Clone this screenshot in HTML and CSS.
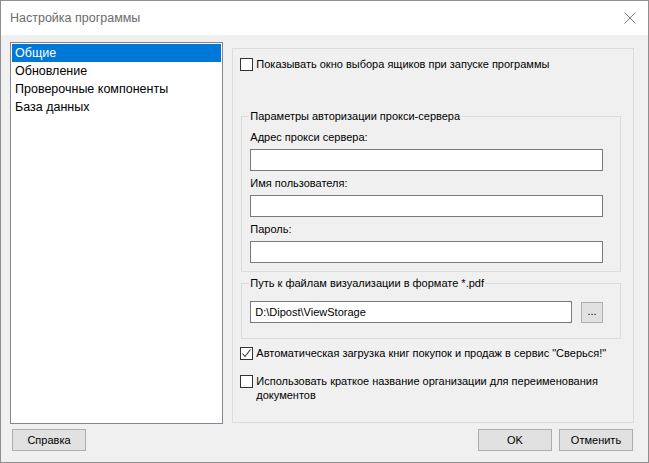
FILE: index.html
```html
<!DOCTYPE html>
<html>
<head>
<meta charset="utf-8" />
<title>Настройка программы</title>
<link rel="stylesheet" href="styles.css">
</head>
<body>

<div class="window">

	<div class="titlebar">
		<span class="title">Настройка программы</span>
		<svg class="close" width="12" height="12" viewBox="0 0 12 12">
			<path d="M0.5 0.5 L11.5 11.5 M11.5 0.5 L0.5 11.5" stroke="#7a7a7a" stroke-width="1" fill="none" />
		</svg>
	</div>

	<div class="main">
		<ul class="listbox">
			<li class="selected">Общие</li>
			<li>Обновление</li>
			<li>Проверочные компоненты</li>
			<li>База данных</li>
		</ul>

		<div class="panel">
			<label class="check first-row">
				<span class="box"></span>
				<span>Показывать окно выбора ящиков при запуске программы</span>
			</label>

			<fieldset class="group proxy">
				<legend>Параметры авторизации прокси-сервера</legend>
				<div class="field-label">Адрес прокси сервера:</div>
				<div class="textbox"></div>
				<div class="field-label">Имя пользователя:</div>
				<div class="textbox"></div>
				<div class="field-label">Пароль:</div>
				<div class="textbox"></div>
			</fieldset>

			<fieldset class="group path">
				<legend>Путь к файлам визуализации в формате *.pdf</legend>
				<div class="path-row">
					<div class="textbox">D:\Dipost\ViewStorage</div>
					<div class="browse">...</div>
				</div>
			</fieldset>

			<label class="check checked-row">
				<span class="box">
					<svg width="11" height="11" viewBox="0 0 11 11">
						<path d="M1.5 5.5 L4 8.5 L9.5 1.5" stroke="#333" stroke-width="1.1" fill="none" />
					</svg>
				</span>
				<span>Автоматическая загрузка книг покупок и продаж в сервис "Сверься!"</span>
			</label>

			<label class="check last-row">
				<span class="box"></span>
				<span>Использовать краткое название организации для переименования документов</span>
			</label>
		</div>
	</div>

	<div class="footer">
		<div class="btn">Справка</div>
		<div class="spacer"></div>
		<div class="btn">OK</div>
		<div class="btn">Отменить</div>
	</div>

</div>

</body>
</html>
```

FILE: styles.css
```css
body {
	margin: 0;
	font-family: "Liberation Sans", Arial, sans-serif;
	font-size: 11px;
	color: #000;
}

.window {
	width: 649px;
	height: 463px;
	box-sizing: border-box;
	border: 1px solid #8f8f8f;
	background: #f0f0f0;
	display: flex;
	flex-direction: column;
}

.titlebar {
	height: 34px;
	background: #fff;
	display: flex;
	align-items: center;
	justify-content: space-between;
	padding: 0 12px 0 9px;
}

.title {
	color: #6b6b6b;
	font-size: 12.5px;
}

.main {
	display: flex;
	align-items: flex-start;
	gap: 9px;
	padding: 7px 14px 0 9px;
}

.listbox {
	list-style: none;
	margin: 0;
	padding: 1px;
	width: 210px;
	height: 378px;
	background: #fff;
	border: 1px solid #828790;
	font-size: 12.5px;
}

.listbox li {
	height: 18px;
	line-height: 18px;
	padding-left: 3px;
}

.listbox li.selected {
	background: #0078d7;
	color: #fff;
}

.panel {
	margin-top: 6px;
	width: 401px;
	height: 373px;
	border: 1px solid #dcdcdc;
}

.check {
	display: flex;
	align-items: flex-start;
	margin-left: 7px;
	line-height: 14px;
}

.check .box {
	flex: none;
	width: 11px;
	height: 11px;
	border: 1px solid #333;
	background: #fff;
	margin-right: 3px;
	margin-top: 1px;
	display: flex;
}

.first-row {
	margin-top: 8px;
}

.group {
	margin: 0 12px 0 8px;
	border: 1px solid #dcdcdc;
	padding: 2px 17px 0 8px;
}

.group legend {
	padding: 0 1px;
	margin-left: -1px;
	line-height: 14px;
}

.proxy {
	margin-top: 38px;
	padding-bottom: 8px;
}

.field-label {
	margin-top: 5px;
	margin-bottom: 5px;
	line-height: 14px;
}

.textbox {
	height: 20px;
	background: #fff;
	border: 1px solid #7a7a7a;
	line-height: 20px;
	padding-left: 4px;
}

.path {
	margin-top: 4px;
	padding-top: 0;
	padding-bottom: 15px;
}

.path-row {
	display: flex;
	gap: 9px;
	margin-top: 11px;
}

.path-row .textbox {
	flex: 1;
}

.browse {
	flex: none;
	width: 20px;
	height: 19px;
	margin-top: 1px;
	background: #e1e1e1;
	border: 1px solid #adadad;
	text-align: center;
	line-height: 16px;
}

.checked-row {
	margin-top: 7px;
}

.last-row {
	margin-top: 14px;
	width: 365px;
}

.footer {
	display: flex;
	gap: 7px;
	padding: 5px 15px 0 11px;
}

.spacer {
	flex: 1;
}

.btn {
	width: 72px;
	height: 20px;
	line-height: 20px;
	text-align: center;
	background: #e1e1e1;
	border: 1px solid #adadad;
}
```
